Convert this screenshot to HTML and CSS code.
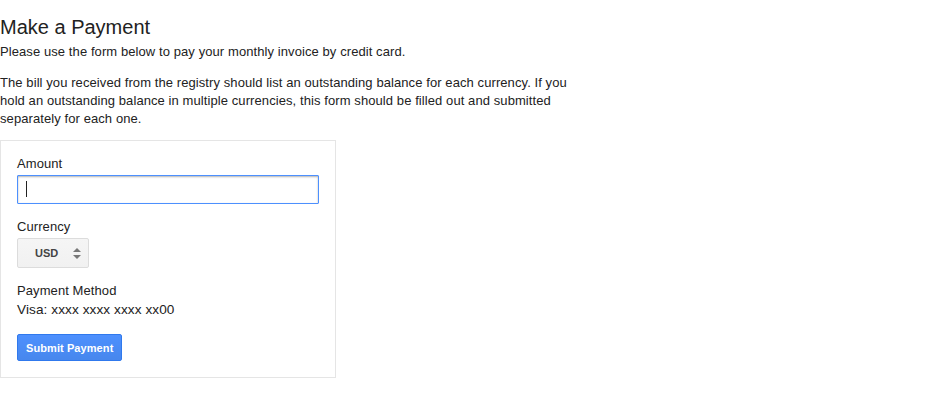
FILE: index.html
```
<!DOCTYPE html>
<html>
<head>
<meta charset="utf-8">
<link rel="stylesheet" href="styles.css">
</head>
<body>
<h1 class="title">Make a Payment</h1>
<p class="intro">Please use the form below to pay your monthly invoice by credit card.</p>
<p class="note">The bill you received from the registry should list an outstanding balance for each currency. If you hold an outstanding balance in multiple currencies, this form should be filled out and submitted separately for each one.</p>
<form class="card">
  <label class="label" for="amount">Amount</label>
  <div class="input-wrap">
    <input class="amount" id="amount" type="text">
    <span class="caret"></span>
  </div>
  <label class="label label-gap" for="currency">Currency</label>
  <div class="select-wrap">
    <select class="select" id="currency"><option>USD</option></select>
    <svg class="arrows" width="8" height="11" viewBox="0 0 8 11"><path d="M4 0 L8 4 L0 4 Z M0 7 L8 7 L4 11 Z" fill="#777"/></svg>
  </div>
  <div class="label label-gap">Payment Method</div>
  <div class="method">Visa: xxxx xxxx xxxx xx00</div>
  <button class="submit" type="button">Submit Payment</button>
</form>
</body>
</html>
```
FILE: styles.css
```
html, body {
  margin: 0;
  padding: 0;
  background: #fff;
}
body {
  font-family: "Liberation Sans", Arial, sans-serif;
  font-size: 13px;
  line-height: 18px;
  letter-spacing: 0.085px;
  color: #222;
}
.title {
  font-size: 20px;
  font-weight: normal;
  line-height: 24px;
  letter-spacing: 0;
  margin: 15px 0 4px;
}
.intro {
  margin: 0 0 13px;
}
.note {
  width: 580px;
  margin: 0 0 12px;
}
.card {
  width: 302px;
  padding: 14px 16px 16px;
  border: 1px solid #e5e5e5;
  display: flex;
  flex-direction: column;
  align-items: flex-start;
}
.label {
  display: block;
  margin-bottom: 2px;
}
.label-gap {
  margin-top: 14px;
}
.input-wrap {
  position: relative;
}
.amount {
  box-sizing: border-box;
  display: block;
  width: 302px;
  height: 29px;
  margin: 0;
  padding: 0 8px;
  border: 1px solid #4d90fe;
  border-radius: 1px;
  box-shadow: inset 0 1px 2px rgba(0,0,0,0.3);
  font: 13px "Liberation Sans", Arial, sans-serif;
  outline: none;
}
.caret {
  position: absolute;
  left: 9px;
  top: 6px;
  width: 1px;
  height: 16px;
  background: #222;
}
.select-wrap {
  position: relative;
}
.select {
  appearance: none;
  -webkit-appearance: none;
  box-sizing: border-box;
  display: block;
  width: 72px;
  height: 30px;
  margin: 0;
  padding: 0 0 0 17px;
  border: 1px solid #dcdcdc;
  border-radius: 2px;
  background: linear-gradient(#f5f5f5, #f1f1f1);
  color: #444;
  font: bold 11px "Liberation Sans", Arial, sans-serif;
}
.arrows {
  position: absolute;
  left: 56px;
  top: 10px;
  pointer-events: none;
}
.method {
  font-size: 13.6px;
  margin-top: -1px;
  margin-bottom: 15px;
}
.submit {
  box-sizing: border-box;
  height: 27px;
  padding: 0 8px;
  margin: 0;
  border: 1px solid #3079ed;
  border-radius: 2px;
  background: linear-gradient(#4d90fe, #4787ed);
  color: #fff;
  letter-spacing: 0.085px;
  font: bold 11px "Liberation Sans", Arial, sans-serif;
}
```
